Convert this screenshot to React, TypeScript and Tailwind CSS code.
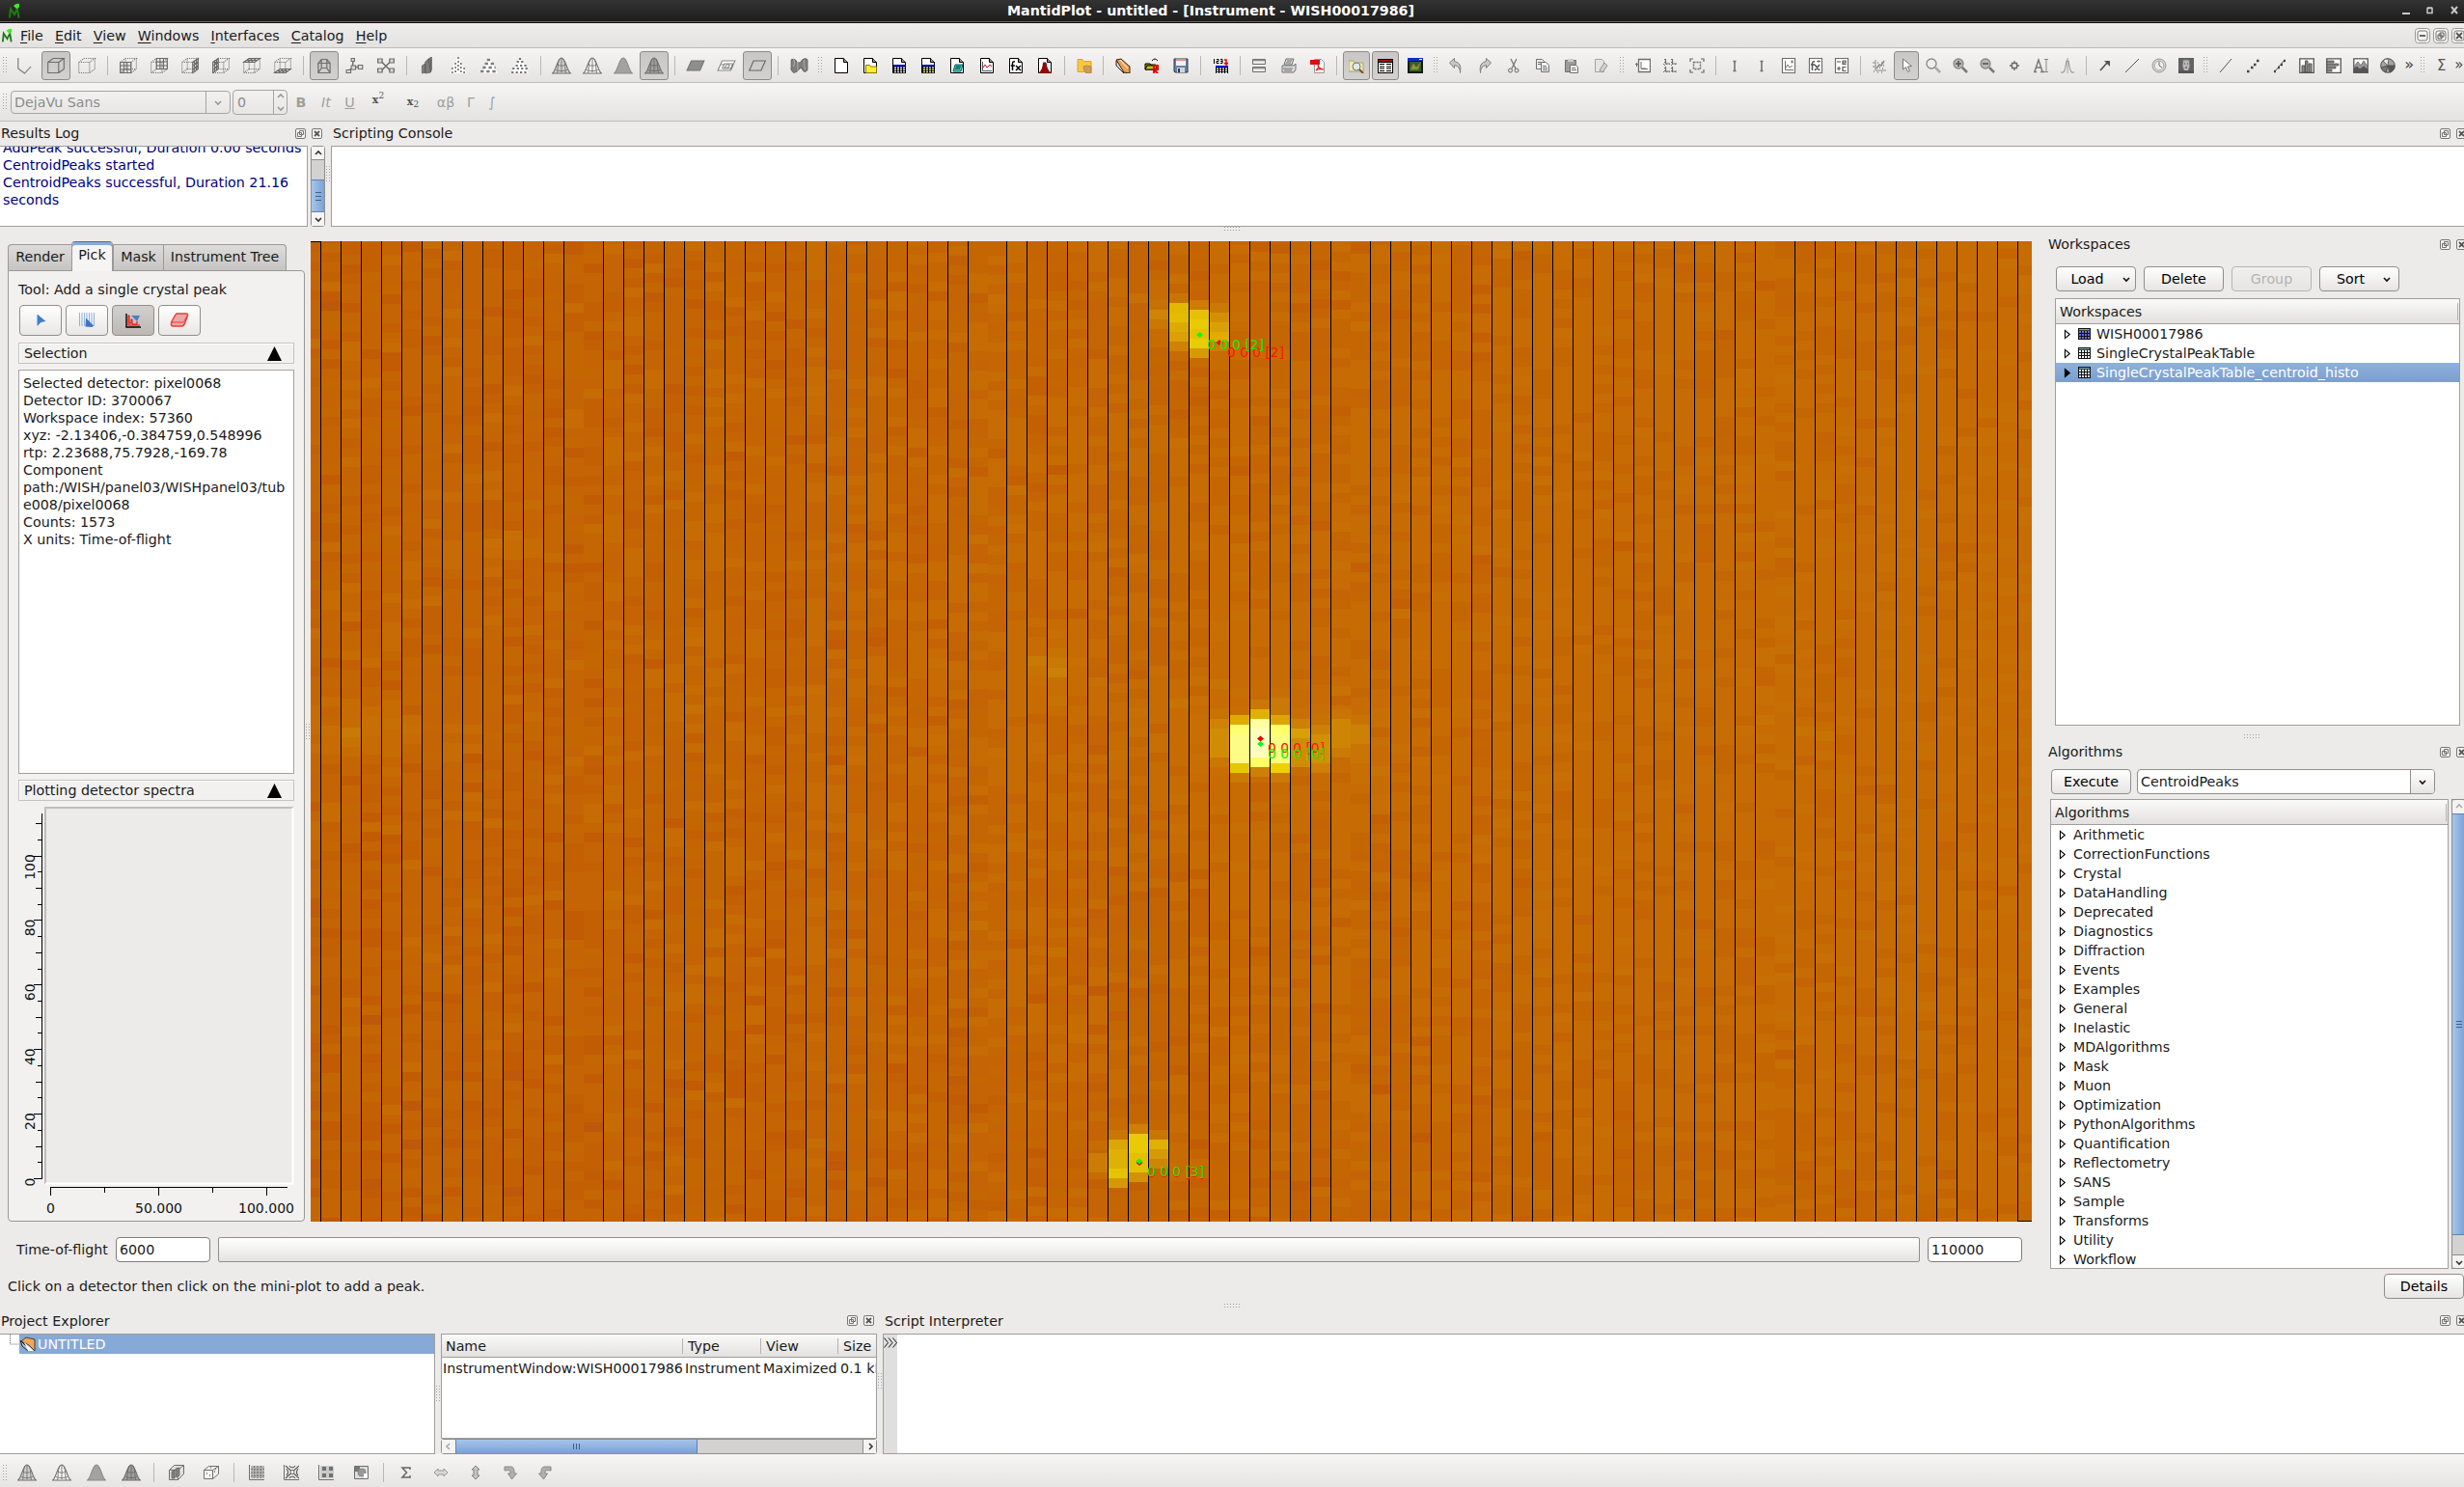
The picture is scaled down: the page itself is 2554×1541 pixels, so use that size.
import React from "react";

type Kids = { children?: React.ReactNode };

/* ---------- small drawing helpers ---------- */

const G = "#6e6e6e";

function P({ d, f = "none", s = G, w = 1, dash }: { d: string; f?: string; s?: string; w?: number; dash?: string }) {
  return <path d={d} fill={f} stroke={s} strokeWidth={w} strokeDasharray={dash} />;
}
function R({ a, f }: { a: number[]; f: string }) {
  return <rect x={a[0]} y={a[1]} width={a[2]} height={a[3]} fill={f} />;
}
function Ico({ children }: Kids) {
  return <svg viewBox="0 0 16 16" className="block h-4 w-4">{children}</svg>;
}
function Wide({ children }: Kids) {
  return <svg viewBox="0 0 18 18" preserveAspectRatio="none" className="block h-[18px] w-5">{children}</svg>;
}

const CUBE = "M1.5 5.500h10v11h-10zM1.500 5.500l5-4h10l-5 4M16.500 1.500v11l-5 4";
const DotCube = () => <P d={CUBE + "M6.500 1.500v11M6.500 12.500l-5 4M6.500 12.500h10"} dash="1 1" />;
const BELL = "M.5 17C4 15 5 1 9 1s5 14 8.500 16z";
const MESH = "M9 1v15M5 8c2 1.500 6 1.500 8 0M3 13c3 2 9 2 12 0M7 2C5 8 6 12 5 17M11 2c2 6 1 10 2 15";

const Bell = ({ kind }: { kind: number }) => (
  <Wide>
    <P d={BELL} f={kind === 2 ? "#a2a2a0" : kind === 3 ? "#a0a09e" : kind === 0 ? "#d0d0ce" : "#f6f6f6"} s={kind === 2 ? "#8a8a8a" : G} />
    {kind !== 2 && <P d={MESH} s={kind === 3 ? "#6c6c6c" : "#767676"} w={0.9} />}
  </Wide>
);
const Face = ({ d }: { d: string }) => (
  <Wide><DotCube /><P d={d} s="#6a6a6a" w={1} /></Wide>
);

const plotIcons: React.ReactNode[] = [
  <Wide><P d="M2.500 1v11l6 5 6-7" s="#777" /></Wide>,
  <Wide><P d={CUBE} /></Wide>,
  <Wide><P d={CUBE} dash="1 1" /></Wide>,
  "|",
  <Face d="M1.500 5.500h10v11h-10zM4.800 5.500v11M8 5.500v11M1.500 9h10M1.500 13h10" />,
  <Face d="M6.500 1.500h10v11h-10zM9.800 1.500v11M13 1.500v11M6.500 5h10M6.500 9h10" />,
  <Face d="M11.500 5.500l5-4v11l-5 4zM13.200 4v11M15 3v11M11.500 9l5-4M11.500 13l5-4" />,
  <Face d="M1.500 5.500l5-4v11l-5 4zM3.200 4v11M5 3v11M1.500 9l5-4M1.500 13l5-4" />,
  <Face d="M1.500 5.500l5-4h10l-5 4zM4.800 5.500l5-4M8 5.500l5-4M4 3.500h10" />,
  <Face d="M1.500 16.500l5-4h10l-5 4zM4.800 16.500l5-4M8 16.500l5-4M4 14.500h10" />,
  "|",
  <Wide><P d="M3.500 16.500v-10l3-4h5l3 4v10zM6.500 2.500v9h5v-9M6.500 11.500l-3 5M11.500 11.500l3 5M3.500 6.500h11" w={1.1} /></Wide>,
  <Wide><P d="M7 2v9M7 11l7-1M7 11l-5 4" w={1.3} /><P d="M5.500 4.500h3v-3h-3zM12 8.500h4v4h-4zM1 13.500h4v3H1zM5.500 9h4v4h-4z" f="#ddd" /></Wide>,
  <Wide><P d="M5 5l8 9M13 5l-8 9" w={1.3} /><P d="M1.500 2h4v4h-4zM12.500 2h4v4h-4zM1.500 12h4v4h-4zM12.500 12h4v4h-4z" f="#ddd" w={1.2} /></Wide>,
  "|",
  <Wide><P d="M4 9l3-2v9l-3 1zM7 5l3-3 2 1v13l-5 1zM10 2l3-2v13l-1 3z" f="#7c7c7c" s="#5c5c5c" w={.7} /></Wide>,
  <Wide><P d="M9 0L1 17h16z" s="none" f="#fff" /><P d="M9 0v16M6.500 6v11M11.500 6v11M3.500 11v6M14.500 11v6" w={1.400} dash="2 2" /></Wide>,
  <Wide><P d="M9 0L1 17h16z" s="none" f="#fff" /><P d="M7 3h4M5 7h9M3 11h12M1 15h16" w={2.600} dash="3 2.500" s="#7c7c7c" /></Wide>,
  <Wide><P d="M9 0L1 17h16z" s="none" f="#fff" /><P d="M8 2h4M6 5h8M5 9h10M2 12h14M1 16h16" w={2} dash="2 2" s="#747474" /></Wide>,
  "|",
  <Bell kind={0} />, <Bell kind={1} />, <Bell kind={2} />, <Bell kind={3} />,
  "|",
  <Wide><P d="M1 14l4-10h12l-4 10z" f="#8e8e8c" s="#747474" /></Wide>,
  <Wide><P d="M1 14l4-10h12l-4 10z" f="#fff" s="#888" /><P d="M5 12l2-5h8l-2 5zM7 11l2-3h3l-1 3zM4 8h3M13 13l2-5" s="#777" w={.9} /></Wide>,
  <Wide><P d="M1.500 14l4-10h11l-4 10z" s="#666" /></Wide>,
  "|",
  <Wide><P d="M2 3q3-2 5 2 2 2 4 0 3-5 6-2v10q-2 4-4 1-2-5-4-1-3 4-5 3-3-3-2-5z" f="#7e7e7e" s="#666" /><P d="M4 2q2 4 0 8M8 5v9M14 3q-1 5 1 10" s="#aaa" /></Wide>,
];

/* blank document with a folded corner */
const Doc = ({ children }: Kids) => (
  <Ico>
    <P d="M1.500 .5h9l4 4v11h-13z" f="#fff" s="#000" />
    <P d="M10.500 .5v4h4" s="#000" f="#999" />
    {children}
  </Ico>
);
const Grid = ({ y = 7, x = 2, c = "#fff", h = "#0000c8" }) => (
  <>
    <R a={[x, y, 13, 9]} f="#000" />
    <R a={[x, y, 13, 2]} f={h} />
    {[0, 1, 2].map((r) => [0, 1, 2, 3].map((k) => <R key={`${r}${k}`} a={[x + 1 + k * 3, y + 2.500 + r * 2.200, 2, 1.300]} f={c} />))}
  </>
);

const fileIcons: React.ReactNode[] = [
  <Doc />,
  <Doc><P d="M3.500 7.500h4l1 1.500h6v6.500h-11z" f="#ffee30" s="#8a7a00" /></Doc>,
  <Doc><Grid /></Doc>,
  <Doc><Grid c="#ffff8c" /></Doc>,
  <Doc><P d="M6 7h8l-2 7H4z" f="#3cc8bc" s="#0a5a5a" /><P d="M7 9h5M6 11h5" s="#033" /></Doc>,
  <Doc><P d="M3.500 4v9.500H13" s="#555" /><P d="M4 10l2-3 2 3 3-3 2 2" s="#e00020" /></Doc>,
  <Doc><P d="M7 4Q4.500 3 4.500 6v7M2.800 8h4M8 8l5 5M13 8l-5 5" s="#000" w={1.500} /></Doc>,
  <Doc><P d="M2 15.500Q6 13 6.500 5h2.500q1 8 5 10.500z" f="#a00000" s="#700" /></Doc>,
  "|",
  <Ico><P d="M1 1.500h5l1.500 2h7.500v11H1z" f="#f5c840" s="#dba52a" /><P d="M7 9q3-2 8 0v7H10q-3-3-3-7z" f="#cf9a5c" s="#b98346" /></Ico>,
  "|",
  <Ico><P d="M1 3l8 7v6L1 8z" f="#ddd" s="#222" /><P d="M1 2l5-1 9 8v7L9 15z" f="#e8a258" s="#402000" /><P d="M5 2l8 9" s="#fff" /></Ico>,
  <Ico><P d="M1 6h5l1 1h5v5H1z" f="#8a8a00" s="#000" /><P d="M1 12l2-4h11l-3 4z" f="#c8c800" s="#000" /><P d="M8 3q3-4 6 0" s="#000" /><P d="M10 16V8h4v4h-4l4 4" s="#e80000" w={2} /></Ico>,
  <Ico><P d="M1 1h14v14H2l-1-1z" f="#6684a6" s="#26384e" /><R a={[3, 1, 10, 7]} f="#f2f2f2" /><R a={[3, 1, 10, 2]} f="#d89080" /><R a={[4, 10, 8, 5]} f="#d0d4d8" /><R a={[5, 11, 2, 4]} f="#334" /></Ico>,
  "|",
  <Ico><P d="M1.500 1v5M4 1.500h2v2H4v2h2.500M8 1.500h2v4H8M8 3.500h2" s="#000" /><P d="M12 2h2v5M12 5l2 2 2-2" s="#e00000" w={1.500} /><Grid x={3} y={8} /></Ico>,
  "|",
  <Ico><P d="M1.500 1.500h13v5h-13zM1.500 9.500h13v5h-13z" f="#ececec" /><P d="M2 2.500h12M2 10.500h12" s="#8a8a8a" w={1.500} /></Ico>,
  <Ico><P d="M5 1h8l-2 6H3zM1 8h12l2-2v6l-2 3H1z" f="#ddd" /><P d="M6 3h5M5 5h5M2 11h10M3 13h8" /></Ico>,
  <Ico><P d="M4.500 1.500h7l3 3v11h-10z" f="#fafafa" s="#999" /><R a={[0, 2, 10, 5]} f="#d81010" /><P d="M6 13q4-4 2-6 0 4 6 5-5-1-8 1z" s="#e02020" w={1.200} /></Ico>,
  "|",
  <Ico><P d="M0 3h5l1 2h9v9H0z" f="#eeeaa8" s="#a8a468" /><circle cx="8" cy="9" r="4" fill="#dfe8ee" stroke="#777" /><P d="M11 12l4 4" s="#7a5030" w={2} /></Ico>,
  <Ico><R a={[0, 1, 16, 15]} f="#000" /><R a={[1, 2, 14, 2]} f="#a01010" /><R a={[1, 5, 14, 10]} f="#fff" /><P d="M2 6.500h5M9 6.500h5M2 9h5M9 9h5M2 11h5M9 11h5M2 13.500h5M9 13.500h5" s="#000" /></Ico>,
  <Ico><R a={[0, 0, 16, 16]} f="#181818" /><R a={[0, 0, 16, 3]} f="#1030c8" /><R a={[12, 1, 3, 1]} f="#fff" /><R a={[2, 4, 12, 10]} f="#30602a" /><P d="M3 12l3-6 3 4 4-5-2 7z" f="#58b838" s="#a86030" /></Ico>,
];
const editIcons: React.ReactNode[] = [
  <Ico><P d="M1.500 5l5-4.500v3q8 1 6 12 0-7-6-8v3z" f="#c8c8c8" s="#808080" /></Ico>,
  <Ico><P d="M14.500 5l-5-4.500v3q-8 1-6 12 0-7 6-8v3z" f="#c8c8c8" s="#808080" /></Ico>,
  <Ico><P d="M5 1l5 10M11 1L6 11" s="#777" w={1.300} /><circle cx="4.500" cy="13" r="2" fill="none" stroke="#666" /><circle cx="11" cy="13" r="2" fill="none" stroke="#666" /></Ico>,
  <Ico><P d="M1.500 1.500h6l2 2v8h-8z" f="#eee" /><P d="M6.500 4.500h5l3 3v7h-8z" f="#f4f4f4" /><P d="M3 4.500h3M3 6.500h3M8 8.500h4M8 10.500h5M8 12.500h5" /></Ico>,
  <Ico><P d="M1.500 2.500h11v12h-11z" f="#9c9c9c" /><R a={[4, 1, 6, 3]} f="#ccc" /><P d="M6.500 7.500h6l2 2v6h-8z" f="#f4f4f4" /><P d="M8 10.500h4M8 12.500h5" /></Ico>,
  <Ico><P d="M2.500 1.500h7l2 2v11h-9z" f="#e4e4e4" s="#a4a4a4" /><P d="M7 13l5-8 3 3-5 7z" f="#d2d2d2" s="#929292" /></Ico>,
];

const Lens = ({ t }: { t?: string }) => (
  <Ico><circle cx="6" cy="6" r="5" fill={t ? "#b8b8b8" : "#eee"} stroke="#888" strokeWidth="1.300" /><P d="M10 10l5 5" s={t ? "#777" : "#aaa"} w={2.500} />{t && <P d={t} s="#555" w={1.600} />}</Ico>
);
const graphIcons: React.ReactNode[] = [
  <Ico><P d="M3.500 1.500h12v13h-12z" f="#fff" w={1.300} /><P d="M6 4v7.500h7M-1 6.500h4M1.500 5v4M8 10v1M10 10v1" /></Ico>,
  <Ico><P d="M3.500 1v5H8M10.500 1v5H15M3.500 9v5H8M10.500 9v5H15" w={1.200} /><P d="M1 6.500h14M1 14.500h14M2.500 1v14M9.500 1v14" dash="1 2" /></Ico>,
  <Ico><P d="M4.500 4.500h7v7h-7z" w={1.500} dash="2 1" /><P d="M1 4V1h3M12 1h3v3M15 12v3h-3M4 15H1v-3" w={1.200} s="#666" /></Ico>,
  "|",
  <Ico><P d="M8 3v11M6.500 3.500h3M6.500 13.500h3M8 6v4" w={1.500} /></Ico>,
  <Ico><P d="M8 3v11M6.500 3.500h3M6.500 13.500h3M8 6v4" w={1.500} /></Ico>,
  <Ico><P d="M1.500 .5h13v15h-13z" f="#fff" w={1.200} /><P d="M4.500 3v9.500H13M5 10l2-3 2 3 3-2M10 4h3M11.500 2.500v3" /></Ico>,
  <Ico><P d="M1.500 .5h13v15h-13z" f="#fff" w={1.200} /><P d="M7 4Q4.500 3 4.500 6v7M3 7h4M7 7l5 6M12 7l-5 6" w={1.500} s="#555" /><P d="M9 3.500h4M11 2v3" /></Ico>,
  <Ico><P d="M1.500 .5h13v15h-13z" f="#fff" w={1.200} /><P d="M3 4h4M3 11h4M5 9v4M9 3h3v2H9v1.500h3.500M12.500 9.500H9v4h3.500M9 3v4" w={1.200} s="#555" /></Ico>,
  "|",
  <Ico><P d="M4 2v11h11M1 5h3M1 9h3" s="#888" /><P d="M5 11l3-4 2 1 3-5M6 5h1M10 5h1M12 8h1M8 10h1M11 11h1M2 14h1M6 15h1M10 15h1" s="#888" w={1.500} /></Ico>,
  <Ico><P d="M4.500 1v11l3-2.500 2 5 2-1-2-4.500 4-.5z" f="#fff" s="#777" /></Ico>,
  <Lens />, <Lens t="M6 3v6M3 6h6" />, <Lens t="M3 6h6" />,
  <Ico><P d="M5.500 5.500h5v5h-5zM8 3v2M8 11v2M3 8h2M11 8h2" w={1.300} s="#666" /></Ico>,
  <Ico><P d="M1 14L5 2l4 12M2.500 10h5M0 14.500h3M7 14.500h4" s="#777" w={1.400} /><P d="M11 1.500h4M11 14.500h4M13 1.500v13" s="#888" /></Ico>,
  <Ico><P d="M8 0v16" s="#bbb" w={1.500} /><P d="M1 15h3q2-3 3-12h2q1 9 3 12h3" s="#8a8a8a" /></Ico>,
  "|",
  <Ico><P d="M3 13l8-9" w={1.700} s="#555" /><P d="M7 3h6v6z" f="#555" s="none" /></Ico>,
  <Ico><P d="M1 15L15 1" s="#555" /></Ico>,
  <Ico><circle cx="8" cy="8" r="7" fill="#d4d4d4" stroke="#999" /><circle cx="8" cy="8" r="4.800" fill="#eee" stroke="#aaa" /><P d="M8 4v4l3 2" /></Ico>,
  <Ico><R a={[0, 0, 16, 16]} f="#626262" /><P d="M5 2h6l1 6-2 6H6L4 8z" f="#b8b8b8" s="#777" /><P d="M6 6h1M9 6h1M7 10h2" s="#444" /><R a={[0, 13, 16, 3]} f="#555" /></Ico>,
];
const curveIcons: React.ReactNode[] = [
  <Ico><P d="M2 15L14 1" s="#555" /></Ico>,
  <Ico><P d="M2 14h2.500M6 10h2.500M9 7h2.500M12 3h2.500" s="#444" w={2.500} /></Ico>,
  <Ico><P d="M3 14L13 2" s="#555" /><P d="M2 14h2M6 10h2M9 7h2M12 3h2" s="#444" w={2.500} /></Ico>,
  <Ico><P d="M.8 .8h14.500v14.500H.8z" f="#fff" s="#555" w={1.300} /><P d="M3 8h3v7H3zM6.500 3H9v12H6.500zM10 6h3v9h-3z" f="#888" s="#555" /></Ico>,
  <Ico><P d="M.8 .8h14.500v14.500H.8z" f="#fff" s="#555" w={1.300} /><P d="M1 3h7v2H1zM1 6h12v2H1zM1 9h9v2H1zM1 12h5v2H1z" f="#888" s="#555" w={.8} /></Ico>,
  <Ico><P d="M.8 .8h14.500v14.500H.8z" f="#fff" s="#555" w={1.300} /><P d="M1 15V9l4-5 3 4 3-5 4 6v6z" f="#999" s="#777" /><P d="M1 15v-4l3-2 3 3 4-3 4 3v3z" f="#555" s="#555" /></Ico>,
  <Ico><circle cx="8" cy="8" r="7.300" fill="#a2a2a2" stroke="#555" /><P d="M8 8L3 3a7 7 0 0 1 6-2z" f="#e8e8e8" s="#666" /><P d="M8 8h7a7 7 0 0 1-5 7z" f="#555" s="#555" /><P d="M8 8L1 10a7 7 0 0 0 5 5z" f="#777" s="#555" /></Ico>,
];
const bottomIcons: React.ReactNode[] = [
  <Bell kind={0} />, <Bell kind={1} />, <Bell kind={2} />, <Bell kind={3} />,
  "|",
  <Ico><P d="M.5 5.500h9v10h-9zM.5 5.500l5-5h10l-6 5M15.500 .5v9l-6 6" f="#ddd" /><P d="M3 14V7l3-1v8zM7 13V4l4-1v8z" f="#808080" s="#666" w={.8} /></Ico>,
  <Ico><P d="M.5 5.500h9v9h-9zM.5 5.500l5-4h10l-6 4M15.500 1.500v8l-6 5" f="#f4f4f4" /><P d="M3 9h1M6 11h1M11 7h1M12 4h1M7 3h1" w={1.600} /></Ico>,
  "|",
  <Ico><P d="M.5 0v15.500H16" /><R a={[2, 1, 14, 13]} f="#b4b4b4" /><P d="M2 4.500h14M2 8h14M2 11.500h14M5.500 1v13M9 1v13M12.500 1v13" s="#777" dash="2 1" /></Ico>,
  <Ico><P d="M.5 0v15.500H16" /><P d="M2 1l14 13M16 1L2 14M3 4q3 4 0 7M15 4q-3 4 0 7M6 1q3 4 6 0M6 14q3-4 6 0" s="#555" w={1.100} /><circle cx="9" cy="7.500" r="2" fill="#fff" stroke="#666" /></Ico>,
  <Ico><P d="M.5 0v15.500H16" /><R a={[2, 1, 14, 13]} f="#cacaca" />{[[4, 2], [11, 2], [4, 9], [11, 9]].map(([x, y]) => <R key={`${x}${y}`} a={[x, y, 4, 4]} f="#707070" />)}</Ico>,
  <Ico><P d="M1.500 1.500h14v13h-14z" f="#ddd" /><R a={[2, 2, 5, 5]} f="#777" /><circle cx="9" cy="8" r="4" fill="#999" stroke="#888" /><R a={[11, 9, 4, 5]} f="#fff" /></Ico>,
  "|",
  <Ico><P d="M12 5V3H4l4.500 5L4 13h8v-2" s="#666" w={1.500} /></Ico>,
  <Ico><P d="M1 8l4-4v2h6V4l4 4-4 4v-2H5v2z" f="#d8d8d8" s="#999" /></Ico>,
  <Ico><P d="M8 1l4 4h-2v6h2l-4 4-4-4h2V5H4z" f="#c4c4c4" s="#808080" /></Ico>,
  <Ico><P d="M2 2h6q4 0 4 5v2h2.500l-5 6-4-6H8V7q0-2-6-1z" f="#b0b0b0" s="#888" /></Ico>,
  <Ico><P d="M14 2H8Q4 2 4 7v2H1.500l5 6 4-6H8V7q0-2 6-1z" f="#b0b0b0" s="#888" /></Ico>,
];

/* ---------- toolbar widgets ---------- */

function Grip() {
  return <div className="h-[17px] w-[5px] shrink-0 bg-[radial-gradient(circle_at_0.5px_0.5px,#a3a2a0_0.6px,transparent_0.7px)] bg-[length:3px_3px]" />;
}
function HGrip() {
  return <div className="h-[5px] w-[17px] shrink-0 bg-[radial-gradient(circle_at_0.5px_0.5px,#a3a2a0_0.6px,transparent_0.7px)] bg-[length:3px_3px]" />;
}
function Strip({ items, cell, btn, sep, pressed = [] }: { items: React.ReactNode[]; cell: string; btn: string; sep: string; pressed?: number[] }) {
  return (
    <>
      {items.map((it, i) =>
        it === "|" ? (
          <div key={i} className={`flex shrink-0 justify-center ${sep}`}><div className="h-5 w-px bg-[#b9b8b6]" /></div>
        ) : (
          <div key={i} className={`flex shrink-0 items-center justify-center ${cell}`}>
            <div className={pressed.includes(i) ? `flex h-[30px] items-center justify-center rounded-[3px] border border-[#8c8b89] bg-linear-to-b from-[#c9c7c5] to-[#d3d1cf] ${btn}` : ""}>{it}</div>
          </div>
        )
      )}
    </>
  );
}
function Slot({ w, children }: Kids & { w: string }) {
  return <div className={`flex shrink-0 items-center justify-center ${w}`}>{children}</div>;
}

function DockBtns({ pad = "mr-[-3px]" }: { pad?: string }) {
  return (
    <div className={`ml-auto flex shrink-0 gap-[6px] ${pad}`}>
      <svg viewBox="0 0 11 11" className="h-[11px] w-[11px]"><rect x=".5" y=".5" width="10" height="10" rx="1.500" fill="#f4f3f2" stroke="#777" /><path d="M4.500 2.500h4v4h-4zM2.500 4.500h4v4h-4z" fill="#f4f3f2" stroke="#666" strokeWidth=".9" /></svg>
      <svg viewBox="0 0 11 11" className="h-[11px] w-[11px]"><rect x=".5" y=".5" width="10" height="10" rx="1.500" fill="#f4f3f2" stroke="#777" /><path d="M3 3l5 5M8 3l-5 5" stroke="#555" strokeWidth="1.800" /></svg>
    </div>
  );
}
function Chev({ dir, c = "#333" }: { dir: "u" | "d" | "l" | "r"; c?: string }) {
  const d = { u: "M2 6l3-3 3 3", d: "M2 4l3 3 3-3", l: "M6 2L3 5l3 3", r: "M4 2l3 3-3 3" }[dir];
  return <svg viewBox="0 0 10 10" className="h-[10px] w-[10px]"><path d={d} fill="none" stroke={c} strokeWidth="1.600" /></svg>;
}
function Logo({ cls }: { cls: string }) {
  return (
    <svg viewBox="0 0 14 16" className={cls}>
      <path d="M2 15.500L3 6l4 6 3-6 1.500 9.500" fill="none" stroke="#1f7a14" strokeWidth="2" />
      <path d="M6 3q3-3 6-2v3q-1 2-3 2z" fill="#3df01c" />
    </svg>
  );
}

/* ---------- detector map ---------- */

const X0 = 322, Y0 = 250, MW = 1784, MH = 1016;
const edges: number[] = [];
const lines: number[] = [];
[[332, 12], [625, 18], [1043, 16], [1420, 19], [1860, 11]].forEach(([s, n]) => {
  for (let k = 0; k <= n; k++) { edges.push(s + 21 * k); lines.push(s + 21 * k); }
  if (s !== 1860) edges.push(s + 21 * n + 21);
});
const starts = [311, ...edges];
const shades = ["#be580a", "#c25c04", "#c36004", "#c56404", "#c46602", "#c76b04", "#c66c03", "#c76f04", "#c77304", "#c97905", "#cb8006"];
const hash = (a: number, b: number) => {
  let h = (a * 374761393 + b * 668265263) | 0;
  h = Math.imul(h ^ (h >>> 13), 1274126177);
  h = Math.imul(h ^ (h >>> 15), 2246822519);
  return ((h ^ (h >>> 16)) >>> 0) / 4294967296;
};
const glows = [
  [378, 758, 50, 22, 4.600], [535, 565, 34, 14, 3.800], [1088, 692, 30, 32, 3.800],
  [1307, 765, 110, 50, 3], [1395, 757, 26, 18, 3], [1240, 335, 50, 30, 2], [1180, 1205, 40, 30, 1.600],
  [1880, 760, 60, 22, 1.400], [700, 730, 60, 25, 1.200],
];
const paths: string[] = shades.map(() => "");
starts.forEach((x, c) => {
  const phase = [0, 3, 1, 5, 2, 4, 8][Math.floor(hash(c, 7) * 7)];
  const bias = (hash(c, 99) - 0.5) * 1;
  const end = starts[c + 1] ?? 2112;
  for (let r = -1; r < 103; r++) {
    const y = Y0 + r * 10 + phase;
    const t = (x - X0) / MW, u = (y - Y0) / MH;
    const n = hash(c * 131 + 5, r + 17) + hash(c * 57 + 3, r * 3 + 41) + hash(c + 900, r * 7) - 1.500;
    let v = 2.800 + 2.300 * Math.min(1, t * 1.050) + 1.300 * Math.sin(Math.PI * Math.min(1, u * 1.050)) * (0.400 + t * 0.400) + bias - 0.400 * u;
    v = Math.min(7.300, v + n * 2.100);
    glows.forEach(([gx, gy, sx, sy, a]) => {
      v += a * Math.exp(-(((x + 10 - gx) / sx) ** 2) - ((y + 5 - gy) / sy) ** 2);
    });
    const i = Math.max(0, Math.min(shades.length - 1, Math.round(v)));
    paths[i] += `M${x - X0} ${y - Y0}h${end - x}v10h${x - end}z`;
  }
});

/* bright cells: x, then [y, height, colour] runs */
const peaks: [number, [number, number, string][]][] = [
  [1191, [[311, 10, "#c77004"], [321, 10, "#cf8407"], [331, 10, "#ca7704"]]],
  [1212, [[304, 10, "#c97503"], [314, 10, "#e3b800"], [324, 10, "#e3bc00"], [334, 10, "#ddaa04"], [344, 10, "#dba006"], [354, 10, "#cf8203"]]],
  [1233, [[311, 10, "#cf7b06"], [321, 10, "#e6c006"], [331, 10, "#e8ca06"], [341, 10, "#e5c204"], [351, 10, "#e8cc06"], [361, 10, "#d59a04"]]],
  [1254, [[304, 10, "#c76c04"], [314, 10, "#ca7a04"], [324, 10, "#d39006"], [334, 10, "#d8a006"], [344, 10, "#e0ac00"], [354, 10, "#cb7d04"]]],
  [1253.500, [[745, 10, "#cf8206"], [755, 30, "#d18c06"], [785, 10, "#ca7706"]]],
  [1275, [[741, 10, "#dfab03"], [751, 10, "#fefe70"], [761, 30, "#fdfd85"], [791, 10, "#e6c704"], [801, 10, "#cb7a05"]]],
  [1296, [[725, 10, "#ca7705"], [735, 10, "#dfb104"], [745, 10, "#fefea0"], [755, 30, "#fdfdbe"], [785, 10, "#fefe66"], [795, 10, "#cd8007"]]],
  [1317, [[741, 10, "#dba605"], [751, 10, "#fefe68"], [761, 30, "#fcfc80"], [791, 10, "#eecf00"], [801, 10, "#cb7a05"]]],
  [1338, [[745, 10, "#cd8005"], [755, 10, "#d8a006"], [765, 30, "#d18c06"]]],
  [1359, [[751, 10, "#cd8005"], [761, 30, "#d19006"], [791, 10, "#cd8005"]]],
  [1380, [[735, 10, "#c97405"], [745, 30, "#ce8506"], [775, 10, "#ca7a05"]]],
  [1400, [[741, 10, "#c87404"], [751, 20, "#cd8006"], [771, 20, "#c87505"]]],
  [1128, [[1195, 20, "#cc7c06"]]],
  [1149, [[1171, 10, "#ca7605"], [1181, 10, "#dba705"], [1191, 10, "#e0b005"], [1201, 10, "#ddb205"], [1211, 10, "#e6c304"], [1221, 10, "#d59905"]]],
  [1170, [[1165, 10, "#ce8006"], [1175, 20, "#e9ca05"], [1195, 20, "#e4c004"], [1215, 10, "#d39205"]]],
  [1191, [[1171, 10, "#ca7605"], [1181, 10, "#e0b004"], [1191, 10, "#d59a06"], [1201, 10, "#cf8606"]]],
];
const marks: [number, number, string, string][] = [
  [1273, 370.500, "#ff1400", "0 0 0 [2]"], [1252, 362.500, "#18e800", "0 0 0 [2]"],
  [1315, 781, "#ff1400", "0 0 0 [0]"], [1315, 786.500, "#18e800", "0 0 0 [0]"],
  [1190, 1221, "#ff1400", "0 0 0 [3]"], [1190, 1219.500, "#18e800", "0 0 0 [3]"],
];
const dots: [number, number, string][] = [
  [1264, 355, "#e81000"], [1243.500, 347, "#00ff10"], [1306.500, 765.500, "#e80000"], [1306.500, 771, "#00ff10"], [1181, 1205, "#d00000"], [1181, 1203.500, "#00ff10"],
];

function DetectorMap() {
  return (
    <svg viewBox={`0 0 ${MW} ${MH}`} className="block h-[1016px] w-[1784px] bg-[#c56404]">
      <g shapeRendering="crispEdges">
        {paths.map((d, i) => <path key={i} d={d} fill={shades[i]} />)}
        {peaks.map(([x, runs]) => runs.map(([y, h, c]) => <rect key={`${x}-${y}`} x={x - X0} y={y - Y0} width={21} height={h} fill={c} />))}
        {lines.map((x) => <rect key={x} x={x - X0} y={0} width={1} height={MH} fill="#000" />)}
        <rect x={0} y={0} width={11} height={1} fill="#000" />
        <rect x={1770} y={MH - 1} width={14} height={1} fill="#000" />
      </g>
      {dots.map(([x, y, c], i) => <path key={i} d={`M${x - X0 - 3.500} ${y - Y0}l3.500-3 3.500 3-3.500 3z`} fill={c} />)}
      {marks.map(([x, y, c, t], i) => <text key={i} x={x - X0 - 1} y={y - Y0 - 1} fill={c} fontSize="13.800">{t}</text>)}
    </svg>
  );
}

/* ---------- left panel ---------- */

function MiniPlot() {
  const y0 = 389, step = 66.900;
  const ticks: React.ReactNode[] = [];
  for (let k = 0; k <= 22; k++) {
    const y = y0 - (k * step) / 4;
    const len = k % 4 === 0 ? 9 : k % 2 === 0 ? 7 : 5;
    ticks.push(<rect key={k} x={25 - len} y={Math.round(y)} width={len} height={1} />);
  }
  return (
    <svg viewBox="0 0 288 428" className="mt-[2px] block h-[428px] w-[288px]" fontSize="14">
      <rect x="27" y="4" width="258" height="391" fill="#edebe9" />
      <path d="M28 395V5h257" fill="none" stroke="#bfbebc" strokeWidth="2" />
      <path d="M28 394.500h256.500V5" fill="none" stroke="#fff" strokeWidth="2" />
      <g shapeRendering="crispEdges">
        <rect x="24" y="11" width="1" height="379" />
        {ticks}
        <rect x="33" y="398" width="246" height="1" />
        {[0, 1, 2, 3, 4].map((k) => <rect key={k} x={33 + k * 56} y="398" width="1" height={k % 2 ? 6 : 9} />)}
      </g>
      {[0, 20, 40, 60, 80, 100].map((n) => (
        <text key={n} transform={`translate(17 ${y0 + (n === 0 ? 4 : n === 100 ? 12 : 8) - (n / 20) * step}) rotate(-90)`} textAnchor="middle" fill="#111">{n}</text>
      ))}
      <text x="33.500" y="425" textAnchor="middle" fill="#111">0</text>
      <text x="145.500" y="425" textAnchor="middle" fill="#111">50.000</text>
      <text x="257" y="425" textAnchor="middle" fill="#111">100.000</text>
    </svg>
  );
}
function Section({ title, cls }: { title: string; cls: string }) {
  return (
    <div className={`flex h-[22px] items-center justify-between border border-[#c4c3c1] pr-3 pl-[5px] shadow-[inset_1px_1px_0_#fff] ${cls}`}>
      <span>{title}</span>
      <svg viewBox="0 0 16 16" className="h-[15px] w-[15px]"><path d="M8 0l8 16H0z" fill="#000" /></svg>
    </div>
  );
}

function ToolButton({ on, children }: Kids & { on?: boolean }) {
  return <div className={`flex h-8 w-11 items-center justify-center rounded-[4px] border border-[#8f8e8c] bg-linear-to-b ${on ? "from-[#d2d0ce] to-[#bdb7b4]" : "from-white to-[#e8e7e5]"}`}>{children}</div>;
}

function LeftPanel() {
  const tab = "flex items-center justify-center border border-b-0 border-[#9a9997] bg-linear-to-b from-[#dddcda] to-[#c6c5c3] h-[27px] -mr-px pb-[2px]";
  return (
    <div className="flex h-[1016px] w-[308px] shrink-0 flex-col">
      <div className="flex h-[30px] items-end">
        <div className={`${tab} w-[67px] rounded-tl-[4px]`}>Render</div>
        <div className="z-10 -mb-px flex h-[31px] w-[43px] items-center justify-center rounded-t-[4px] border border-b-0 border-[#9a9997] border-t-[#4a6fa5] bg-[#f6f5f4] pb-1 shadow-[inset_0_3px_0_#86abd9]">Pick</div>
        <div className={`${tab} w-[53px]`}>Mask</div>
        <div className={`${tab} w-[128px] rounded-tr-[4px]`}>Instrument Tree</div>
      </div>
      <div className="flex flex-1 flex-col rounded-[4px] rounded-tl-none border border-[#9a9997] bg-[#f2f1f0] pr-[10px] pl-[10px]">
        <div className="mt-[10px] h-[18px] leading-[18px]">Tool: Add a single crystal peak</div>
        <div className="mt-[7px] ml-[1px] flex gap-1">
          <ToolButton><svg viewBox="0 0 16 16" className="h-4 w-4"><path d="M4.500 1.500l9 7.500-5 1-4 4z" fill="#3f7cd0" /></svg></ToolButton>
          <ToolButton><svg viewBox="0 0 16 16" className="h-4 w-4"><path d="M.5 0v14M3 0v14M5.500 0v14M8 0v14M10.500 0v14M13 0v14M15.500 0v14" stroke="#8fb2e2" strokeWidth="1" /><path d="M7 5.500l8 8-1.500 1.500-7-.5z" fill="#3f74c4" /></svg></ToolButton>
          <ToolButton on><svg viewBox="0 0 16 16" className="h-4 w-4"><path d="M1 1v14h15" stroke="#000" fill="none" strokeWidth="1.400" /><path d="M3 13V3h1v8h2V7h1v5h5V9M3 13h12" stroke="#e00" fill="none" /><path d="M6 3h9l-3 6z" fill="#4a7cc8" /></svg></ToolButton>
          <ToolButton><svg viewBox="0 0 20 16" className="h-4 w-5"><path d="M2 9l4-7q.5-1 2-1h9q2 0 1.500 2l-3 8q-1 3-3 3h-9q-2.500 0-2-3z" fill="#e9a9a4" stroke="#f03a3a" strokeWidth="1.500" /><path d="M2 10h11q1.500 0 2-1l3-6" fill="none" stroke="#f03a3a" /></svg></ToolButton>
        </div>
        <Section title="Selection" cls="mt-[7px]" />
        <div className="mt-[6px] h-[419px] border border-[#a3a2a0] bg-white pt-[4px] pl-1 leading-[18px]">
          <div>Selected detector: pixel0068</div>
          <div>Detector ID: 3700067</div>
          <div>Workspace index: 57360</div>
          <div>xyz: -2.13406,-0.384759,0.548996</div>
          <div>rtp: 2.23688,75.7928,-169.78</div>
          <div>Component</div>
          <div>path:/WISH/panel03/WISHpanel03/tub</div>
          <div>e008/pixel0068</div>
          <div>Counts: 1573</div>
          <div>X units: Time-of-flight</div>
        </div>
        <Section title="Plotting detector spectra" cls="mt-[6px]" />
        <MiniPlot />
      </div>
    </div>
  );
}

/* ---------- right docks ---------- */

const Arrow = ({ full }: { full?: boolean }) => (
  <svg viewBox="0 0 8 12" className="h-[11px] w-[8px] shrink-0"><path d="M1.200 1.500v9L6.500 6z" fill={full ? "#000" : "#fff"} stroke="#000" strokeWidth="1.200" /></svg>
);
const TableIcon = ({ c }: { c: string }) => (
  <svg viewBox="0 0 13 12" className="h-3 w-[13px] shrink-0"><rect width="13" height="12" fill="#111" /><rect x="1" y="1" width="11" height="1.300" fill="#77aaa8" />{[0, 1, 2].map((r) => [0, 1, 2, 3].map((k) => <rect key={`${r}${k}`} x={1 + k * 3} y={3 + r * 3} width="2" height="2" fill={c} />))}</svg>
);
function Button({ children, menu, off }: Kids & { menu?: boolean; off?: boolean }) {
  return (
    <div className={`flex h-[26px] w-[83px] shrink-0 items-center justify-center rounded-[4px] border bg-linear-to-b to-[#e6e5e3] ${off ? "border-[#b5b4b2] from-[#f0efee] text-[#b4b3b1]" : "border-[#8f8e8c] from-white text-black"}`}>
      <span className={menu ? "mr-[18px]" : ""}>{children}</span>
      {menu && <span className="mr-[-10px]"><Chev dir="d" c="#111" /></span>}
    </div>
  );
}
function TreeHead({ children }: Kids) {
  return (
    <div className="flex h-[26px] shrink-0 items-center border-b border-[#9f9e9c] bg-linear-to-b from-[#fafaf9] to-[#e2e1df] pl-1">
      {children}<div className="mr-[1px] ml-auto h-[18px] w-px bg-[#b4b3b1]" />
    </div>
  );
}
const algorithms = ["Arithmetic", "CorrectionFunctions", "Crystal", "DataHandling", "Deprecated", "Diagnostics", "Diffraction", "Events", "Examples", "General", "Inelastic", "MDAlgorithms", "Mask", "Muon", "Optimization", "PythonAlgorithms", "Quantification", "Reflectometry", "SANS", "Sample", "Transforms", "Utility", "Workflow"];

function RightDocks() {
  return (
    <div className="flex w-[439px] shrink-0 flex-col">
      <div className="flex h-[26px] items-center pl-[8px]">Workspaces<DockBtns /></div>
      <div className="mt-[10px] ml-4 flex gap-2">
        <Button menu>Load</Button><Button>Delete</Button><Button off>Group</Button><Button menu>Sort</Button>
      </div>
      <div className="mt-[7px] ml-[15px] flex h-[443px] w-[420px] flex-col border border-[#9f9e9c] bg-white">
        <TreeHead>Workspaces</TreeHead>
        <div className="flex h-5 items-center pl-2"><Arrow /><div className="w-[7px]" /><TableIcon c="#6f6be0" /><span className="ml-[6px]">WISH00017986</span></div>
        <div className="flex h-5 items-center pl-2"><Arrow /><div className="w-[7px]" /><TableIcon c="#fff" /><span className="ml-[6px]">SingleCrystalPeakTable</span></div>
        <div className="flex h-5 items-center bg-linear-to-b from-[#8cb1e0] to-[#7d9ecb] pl-2 text-white"><Arrow full /><div className="w-[7px]" /><TableIcon c="#dfe8f4" /><span className="ml-[6px]">SingleCrystalPeakTable_centroid_histo</span></div>
      </div>
      <div className="mt-[9px] flex justify-center"><HGrip /></div>
      <div className="flex h-[26px] items-center pl-[8px]">Algorithms<DockBtns /></div>
      <div className="mt-[5px] ml-[11px] flex gap-[6px]">
        <Button>Execute</Button>
        <div className="flex h-[26px] w-[309px] overflow-hidden rounded-[4px] border border-[#8f8e8c] bg-white">
          <div className="flex flex-1 items-center pl-[3px]">CentroidPeaks</div>
          <div className="flex w-[25px] items-center justify-center border-l border-[#8f8e8c] bg-linear-to-b from-white to-[#e6e5e3]"><Chev dir="d" c="#111" /></div>
        </div>
      </div>
      <div className="mt-[5px] ml-[10px] flex h-[487px] gap-[3px]">
        <div className="flex w-[413px] shrink-0 flex-col overflow-hidden border border-[#9f9e9c] bg-white">
          <TreeHead>Algorithms</TreeHead>
          {algorithms.map((a) => <div key={a} className="flex h-5 shrink-0 items-center pl-[8px]"><Arrow /><span className="ml-[7px]">{a}</span></div>)}
        </div>
        <div className="flex w-[15px] shrink-0 flex-col border border-[#8f8e8c] bg-[#d3d2d0]">
          <div className="flex h-[14px] items-center justify-center rounded-t bg-[#f4f3f2]"><Chev dir="u" c="#aaa" /></div>
          <div className="flex h-[437px] flex-col items-center justify-center gap-[2px] border-y border-[#5b82b5] bg-linear-to-r from-[#a6c5ea] to-[#7ba2d4]">
            <div className="h-px w-[6px] bg-[#3e5f8c]" /><div className="h-px w-[6px] bg-[#3e5f8c]" /><div className="h-px w-[6px] bg-[#3e5f8c]" />
          </div>
          <div className="mt-auto flex h-[14px] items-center justify-center rounded-b border-t border-[#8f8e8c] bg-[#f4f3f2]"><Chev dir="d" /></div>
        </div>
      </div>
      <div className="mt-[5px] ml-[356px]"><Button>Details</Button></div>
    </div>
  );
}

/* ---------- page ---------- */

export default function App() {
  const field = "flex h-[26px] items-center rounded-[4px] border border-[#7f7e7c] bg-white pl-[3px]";
  return (
    <div className="flex h-[1541px] w-[2554px] flex-col overflow-hidden bg-[#edebe9] font-['DejaVu_Sans',sans-serif] text-[14.24px] leading-[18px] whitespace-nowrap text-[#1a1a1a]">
      {/* window title */}
      <div className="flex h-6 shrink-0 items-center border-b border-[#0c0c0c] bg-linear-to-b from-[#333] to-[#1c1c1c] pb-[2px] shadow-[inset_0_-1px_0_#4f6d92]">
        <Logo cls="ml-2 h-4 w-[14px]" />
        <div className="ml-[1022px] w-[424px] text-[14.2px] font-bold text-white">MantidPlot - untitled - [Instrument - WISH00017986]</div>
        <svg viewBox="0 0 60 12" className="mr-[5px] ml-auto h-3 w-[60px]"><path d="M1 9h8" stroke="#c8c8c8" strokeWidth="2" /><path d="M27 3.500h5v5h-5zM27 3h5" stroke="#c8c8c8" strokeWidth="1.500" fill="none" /><path d="M52 2l6 7M58 2l-6 7" stroke="#c8c8c8" strokeWidth="2" /></svg>
      </div>
      {/* menus */}
      <div className="flex h-[26px] shrink-0 items-center border-b border-[#bdbcba] bg-linear-to-b from-[#efeeed] to-[#e3e2e0]">
        <Logo cls="ml-[1px] h-[15px] w-[13px]" />
        <div className="ml-[7px] flex gap-[12.2px]">
          {["File", "Edit", "View", "Windows", "Interfaces", "Catalog", "Help"].map((m) => (
            <span key={m}><span className="underline underline-offset-2">{m[0]}</span>{m.slice(1)}</span>
          ))}
        </div>
        <div className="mr-[-3px] ml-auto flex gap-[3px]">
          {["M5 8h6", "M7 5h4v4H7zM5 7h4v4H5z", "M5 5l6 6M11 5l-6 6"].map((d, i) => (
            <svg key={i} viewBox="0 0 16 16" className="h-4 w-4"><rect x=".5" y=".5" width="15" height="15" rx="3" fill="#f6f5f4" stroke="#999" /><rect x="3" y="3" width="10" height="10" rx="2" fill="none" stroke="#777" /><path d={d} fill="none" stroke="#555" strokeWidth={i === 1 ? 1 : 1.800} /></svg>
          ))}
        </div>
      </div>
      {/* main toolbar */}
      <div className="flex h-9 shrink-0 items-center border-b border-[#bdbcba] bg-linear-to-b from-[#f6f5f4] to-[#e4e3e1]">
        <Slot w="w-[10px]"><Grip /></Slot>
        <Strip items={plotIcons} cell="w-[32.1px]" btn="w-[30px]" sep="w-[10.6px]" pressed={[1, 11, 23, 27]} />
        <Slot w="w-[12.8px]"><Grip /></Slot>
        <Strip items={fileIcons} cell="w-[30.2px]" btn="w-[28px]" sep="w-[10.3px]" pressed={[21, 22]} />
        <Slot w="w-[12.7px]"><Grip /></Slot>
        <Strip items={editIcons} cell="w-[30px]" btn="w-[28px]" sep="w-[10px]" />
        <Slot w="w-[15px]"><Grip /></Slot>
        <Strip items={graphIcons} cell="w-[27.9px]" btn="w-[26px]" sep="w-[10.9px]" pressed={[11]} />
        <Slot w="w-[13.7px]"><Grip /></Slot>
        <Strip items={curveIcons} cell="w-[27.9px]" btn="w-[26px]" sep="w-[11px]" />
        <Slot w="w-[17px]"><span className="pb-[2px] text-base text-[#444]">»</span></Slot>
        <Slot w="w-[12px]"><Grip /></Slot>
        <Slot w="w-[26px]"><span className="text-[15px] text-[#555]">Σ</span></Slot>
        <Slot w="w-[10px]"><span className="pb-[2px] text-[15px] text-[#444]">»</span></Slot>
      </div>
      {/* text format toolbar */}
      <div className="flex h-10 shrink-0 items-center border-b border-[#bdbcba] bg-linear-to-b from-[#f6f5f4] to-[#e4e3e1] text-[#8c8b89]">
        <Slot w="w-[11px]"><Grip /></Slot>
        <div className="flex h-6 w-[228px] rounded-[4px] border border-[#a6a5a3]">
          <div className="flex flex-1 items-center pl-[3px]">DejaVu Sans</div>
          <div className="flex w-[25px] items-center justify-center border-l border-[#a6a5a3]"><Chev dir="d" c="#999" /></div>
        </div>
        <div className="ml-[2px] flex h-[26px] w-[57px] rounded-[4px] border border-[#a6a5a3]">
          <div className="flex flex-1 items-center pl-[4px]">0</div>
          <div className="flex w-[14px] flex-col items-center justify-around border-l border-[#a6a5a3]"><Chev dir="u" c="#999" /><Chev dir="d" c="#999" /></div>
        </div>
        <div className="flex items-center text-[#a09f9d]">
          <Slot w="w-[28px]"><b>B</b></Slot>
          <Slot w="w-[24px]"><i>It</i></Slot>
          <Slot w="w-[25px]"><u>U</u></Slot>
          <Slot w="w-[34px]"><span className="pb-1 font-['DejaVu_Serif',serif] text-[11px] font-bold text-[#555]">x<sup className="text-[9px] font-normal">2</sup></span></Slot>
          <Slot w="w-[38px]"><span className="font-['DejaVu_Serif',serif] text-[11px] font-bold text-[#555]">x<sub className="text-[9px] font-normal">2</sub></span></Slot>
          <Slot w="w-[30px]">αβ</Slot>
          <Slot w="w-[22px]">Γ</Slot>
          <Slot w="w-[22px]">∫</Slot>
        </div>
      </div>
      {/* log and console */}
      <div className="flex h-[109px] shrink-0">
        <div className="flex w-[337px] flex-col">
          <div className="flex h-[25px] items-center pb-px pl-[1px]">Results Log<DockBtns pad="mr-[3px]" /></div>
          <div className="flex h-[84px] gap-[3px]">
            <div className="flex w-[319px] flex-col justify-end overflow-hidden border border-l-0 border-[#9f9e9c] bg-white pb-[18px] pl-[3px] text-[#00007f]">
              <div>AddPeak successful, Duration 0.00 seconds</div>
              <div>CentroidPeaks started</div>
              <div>CentroidPeaks successful, Duration 21.16</div>
              <div>seconds</div>
            </div>
            <div className="flex w-[15px] flex-col rounded-[3px] border border-[#8f8e8c] bg-[#d3d2d0]">
              <div className="flex h-[14px] items-center justify-center border-b border-[#8f8e8c] bg-[#f6f5f4]"><Chev dir="u" /></div>
              <div className="mt-[20px] flex h-[34px] flex-col items-center justify-center gap-[3px] border-y border-[#5b82b5] bg-linear-to-r from-[#a6c5ea] to-[#7ba2d4]">
                <div className="h-px w-[6px] bg-[#3e5f8c]" /><div className="h-px w-[6px] bg-[#3e5f8c]" /><div className="h-px w-[6px] bg-[#3e5f8c]" />
              </div>
              <div className="mt-auto flex h-[14px] items-center justify-center bg-[#f6f5f4]"><Chev dir="d" /></div>
            </div>
          </div>
        </div>
        <div className="flex w-[6px] items-center justify-center"><Grip /></div>
        <div className="flex flex-1 flex-col">
          <div className="flex h-[25px] items-center pb-px pl-[2px]">Scripting Console<DockBtns /></div>
          <div className="h-[84px] border border-r-0 border-[#9f9e9c] bg-white" />
        </div>
      </div>
      <div className="flex h-[5px] shrink-0 items-center justify-center"><HGrip /></div>
      {/* instrument view and docks */}
      <div className="flex h-[1111px] shrink-0">
        <div className="flex w-[2115px] shrink-0 flex-col pt-[10px]">
          <div className="flex pl-2">
            <LeftPanel />
            <div className="flex w-[6px] items-center justify-center"><Grip /></div>
            <DetectorMap />
          </div>
          <div className="mt-4 flex items-center pl-[17px]">
            <div className="w-[103px]">Time-of-flight</div>
            <div className={`${field} w-[98px]`}>6000</div>
            <div className="ml-2 h-[26px] w-[1764px] rounded-[2px] border border-[#8f8e8c] bg-linear-to-b from-white to-[#e4e3e1]" />
            <div className={`${field} ml-[8px] w-[98px]`}>110000</div>
          </div>
          <div className="mt-[16px] pl-2">Click on a detector then click on the mini-plot to add a peak.</div>
        </div>
        <RightDocks />
      </div>
      <div className="flex h-[5px] shrink-0 items-center justify-center"><HGrip /></div>
      {/* explorer and interpreter */}
      <div className="flex h-[151px] shrink-0">
        <div className="flex w-[909px] flex-col">
          <div className="flex h-[26px] items-center pb-px pl-[1px]">Project Explorer<DockBtns pad="mr-[3px]" /></div>
          <div className="flex h-[125px]">
            <div className="w-[451px] border border-l-0 border-[#9f9e9c] bg-white">
              <div className="flex h-5 items-center">
                <svg viewBox="0 0 20 20" className="h-5 w-5"><path d="M10.500 0v10H20" fill="none" stroke="#666" strokeDasharray="1 1" /></svg>
                <div className="flex h-5 flex-1 items-center bg-[#86a9d8] text-white">
                  <svg viewBox="0 0 16 16" className="ml-[1px] h-4 w-4"><path d="M0 4l8 8v3L2 10z" fill="#bbb" stroke="#222" /><path d="M1 5l5-4 9 2v12l-6-6z" fill="#f0a858" stroke="#222" strokeWidth=".8" /><path d="M4 6l10 9H8z" fill="#fff" /></svg>
                  <span className="ml-[2px]">UNTITLED</span>
                </div>
              </div>
            </div>
            <div className="flex w-[6px] items-center justify-center"><Grip /></div>
            <div className="flex w-[452px] flex-col">
              <div className="h-[109px] overflow-hidden border border-[#9f9e9c] bg-white">
                <div className="flex h-[24px] items-center border-b border-[#9f9e9c] bg-linear-to-b from-[#fafaf9] to-[#e2e1df]">
                  <div className="w-[250px] shrink-0 border-r border-[#b4b3b1] pl-1 leading-4">Name</div>
                  <div className="w-[81px] shrink-0 border-r border-[#b4b3b1] pl-[5px] leading-4">Type</div>
                  <div className="w-[80px] shrink-0 border-r border-[#b4b3b1] pl-[5px] leading-4">View</div>
                  <div className="pl-[5px]">Size</div>
                </div>
                <div className="flex h-[21px] items-center pl-px">
                  <div className="w-[251px] shrink-0">InstrumentWindow:WISH00017986</div>
                  <div className="w-[81px] shrink-0">Instrument</div>
                  <div className="w-[80px] shrink-0">Maximized</div>
                  <div>0.1 kB</div>
                </div>
              </div>
              <div className="flex h-4 rounded-[3px] border border-[#8f8e8c] bg-[#d3d2d0]">
                <div className="flex w-[14px] items-center justify-center bg-[#f4f3f2]"><Chev dir="l" c="#aaa" /></div>
                <div className="flex w-[251px] items-center justify-center gap-[2px] border-x border-[#5b82b5] bg-linear-to-b from-[#a6c5ea] to-[#7ba2d4]">
                  <div className="h-[6px] w-px bg-[#3e5f8c]" /><div className="h-[6px] w-px bg-[#3e5f8c]" /><div className="h-[6px] w-px bg-[#3e5f8c]" />
                </div>
                <div className="ml-auto flex w-[14px] items-center justify-center border-l border-[#8f8e8c] bg-[#f4f3f2]"><Chev dir="r" /></div>
              </div>
            </div>
          </div>
        </div>
        <div className="flex w-[6px] items-center justify-center"><Grip /></div>
        <div className="flex flex-1 flex-col">
          <div className="flex h-[26px] items-center pb-px pl-[2px]">Script Interpreter<DockBtns /></div>
          <div className="flex h-[125px] border border-r-0 border-[#9f9e9c] bg-white">
            <div className="w-[14px] bg-[#dfdfdf] pt-[3px]"><svg viewBox="0 0 14 11" className="h-[11px] w-[14px]"><path d="M.5 .5l4 5-4 5M5 .5l4 5-4 5M9.500 .5l4 5-4 5" fill="none" stroke="#000" strokeWidth=".9" /></svg></div>
          </div>
        </div>
      </div>
      {/* lower toolbar */}
      <div className="flex flex-1 items-center bg-linear-to-b from-[#f6f5f4] to-[#e6e5e3] pt-[4px]">
        <Slot w="w-[10px]"><Grip /></Slot>
        <Strip items={bottomIcons} cell="w-[36px]" btn="w-[30px]" sep="w-[11px]" />
      </div>
    </div>
  );
}
